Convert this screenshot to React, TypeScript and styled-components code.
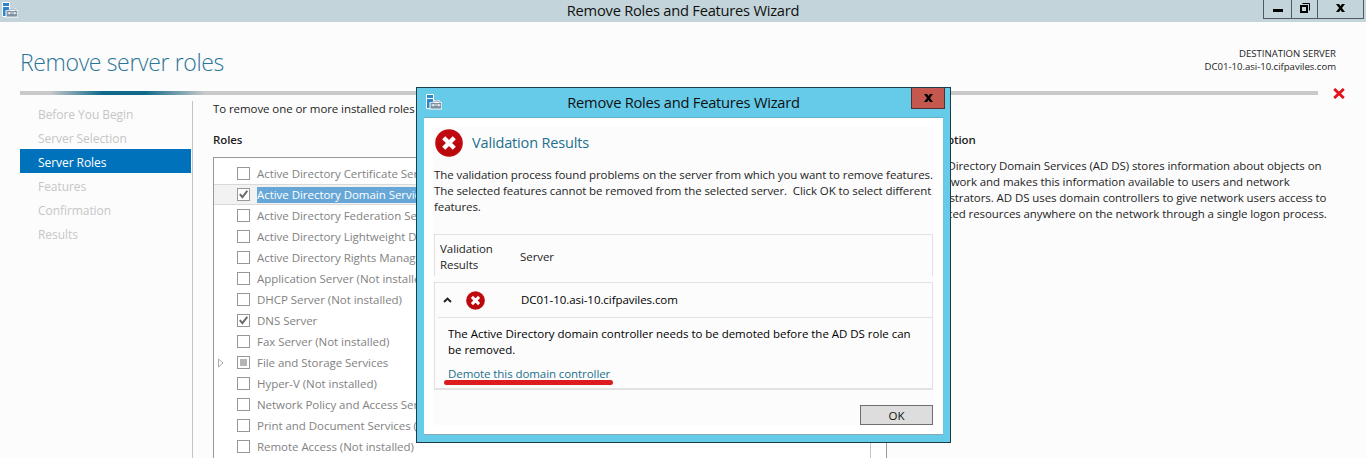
import React from 'react';
import styled, { createGlobalStyle, css } from 'styled-components';

const GlobalStyle = createGlobalStyle`
  * { box-sizing: border-box; }
  body {
    margin: 0;
    overflow: hidden;
    background: #fcfcfc;
    color: #1e1e1e;
    font: 11.5px/16px "Open Sans", "Noto Sans", sans-serif;
    letter-spacing: -0.06px;
  }
`;

const Window = styled.div`
  position: relative;
  display: flex;
  flex-direction: column;
  height: 458px;
  overflow: hidden;
  background: #fcfcfc;
`;

const TitleBar = styled.header`
  display: grid;
  grid-template-columns: 105px 1fr 105px;
  flex: none;
  height: 22px;
  background: #c3d5da;
`;

const AppIcon = styled.svg`
  display: block;
  width: 16px;
  height: 16px;
  margin: 2px 0 0 2px;
`;

const WindowTitle = styled.h1<{ $height: number }>`
  margin: 0;
  color: #111;
  font-size: 14.7px;
  font-weight: 400;
  line-height: ${p => p.$height}px;
  letter-spacing: -0.25px;
  text-align: center;
  white-space: nowrap;
`;

const Controls = styled.div`
  display: flex;
  height: 19px;
  margin-left: 2px;
`;

const ControlButton = styled.button<{ $width: number }>`
  display: flex;
  align-items: center;
  justify-content: center;
  width: ${p => p.$width}px;
  padding: 0 0 2px;
  border: solid #4f5b60;
  border-width: 0 1px 1px 0;
  background: transparent;
  &:first-child { border-left-width: 1px; }
`;

const PageHeader = styled.div`
  display: flex;
  flex: none;
  justify-content: space-between;
  height: 69px;
  padding: 24px 30px 0 20px;
`;

const PageTitle = styled.h2`
  margin: 0;
  color: #2b7596;
  font-size: 23px;
  font-weight: 300;
  line-height: 32px;
  letter-spacing: -0.36px;
`;

const Destination = styled.div`
  padding-top: 1px;
  font-size: 9.6px;
  line-height: 13px;
  letter-spacing: -0.03px;
  text-align: right;
`;

const ProgressRow = styled.div`
  display: flex;
  flex: none;
  height: 4px;
  padding-left: 20px;
  align-items: center;
  gap: 15px;
`;

const ProgressTrack = styled.div`
  width: 1298px;
  height: 4px;
  background: linear-gradient(90deg, #c9c9c9 30px, #0f6a8a 82px, #0f6a8a 125px, #c9c9c9 185px);
`;

const Body = styled.div`
  display: flex;
  flex: 1;
  min-height: 0;
  padding: 6px 0 0 20px;
`;

const Nav = styled.nav`
  width: 173px;
  padding-right: 1px;
  border-right: 1px solid #c4c4c4;
`;

const NavItem = styled.div<{ $active?: boolean }>`
  height: 24px;
  padding-left: 18px;
  color: #c6c6c6;
  font-size: 12px;
  line-height: 28px;
  ${p => p.$active && css`
    background: #0072bc;
    color: #fff;
  `}
`;

const Main = styled.main`
  display: flex;
  flex-direction: column;
  width: 674px;
  margin-left: 20px;
`;

const Intro = styled.p`
  margin: 0;
  height: 31px;
  letter-spacing: -0.08px;
`;

const SectionLabel = styled.h3`
  margin: 0;
  font-size: 11.5px;
  font-weight: 600;
  line-height: 16px;
  letter-spacing: -0.1px;
`;

const RoleBox = styled.div`
  display: flex;
  flex: 1;
  min-height: 0;
  margin-top: 9px;
  border: solid #999;
  border-width: 1px 1px 0;
  background: #fff;
  overflow: hidden;
`;

const RoleList = styled.div`
  width: 657px;
  padding-top: 5px;
  border-right: 1px solid #c4c4c4;
`;

const RoleRow = styled.div<{ $selected?: boolean }>`
  display: grid;
  grid-template-columns: 23px 20px auto;
  align-items: center;
  justify-content: start;
  height: 21px;
  color: #828282;
  letter-spacing: -0.04px;
  ${p => p.$selected && css`
    background: #f2f2f2;
    box-shadow: inset 0 1px #d9d9d9, inset 0 -1px #d9d9d9;
    color: #fff;
  `}
`;

const RoleName = styled.span<{ $selected?: boolean }>`
  white-space: nowrap;
  background: ${p => (p.$selected ? '#66a7d8' : 'none')};
`;

const Expander = styled.svg`
  width: 6px;
  height: 10px;
  margin-left: 4px;
`;

const CheckBox = styled.span`
  display: flex;
  align-items: center;
  justify-content: center;
  width: 13px;
  height: 13px;
  border: 1px solid #979797;
  background: #fff;
`;

const PartialMark = styled.i`
  width: 7px;
  height: 7px;
  background: #b5b5b5;
`;

const Description = styled.section`
  margin-left: 26px;
  padding-top: 31px;
`;

const DescriptionText = styled.p`
  margin: 10px 0 0;
  letter-spacing: -0.08px;
  white-space: nowrap;
`;

const Dialog = styled.section`
  position: absolute;
  left: 416px;
  top: 87px;
  display: flex;
  flex-direction: column;
  width: 535px;
  height: 356px;
  border: 1px solid #1d3c49;
  background: #66cae9;
`;

const DialogBar = styled.header`
  display: grid;
  grid-template-columns: 57px 1fr 57px;
  height: 29px;
`;

const DialogIcon = styled(AppIcon)`
  margin: 6px 0 0 9px;
`;

const CloseButton = styled.button`
  display: flex;
  align-items: center;
  justify-content: center;
  justify-self: end;
  width: 34px;
  height: 21px;
  margin-right: 5px;
  padding: 0 0 1px;
  border: 1px solid #54302f;
  border-top: 0;
  background: #c4584f;
`;

const DialogBody = styled.div`
  flex: 1;
  display: flex;
  flex-direction: column;
  margin: 0 7px 7px;
  padding: 10px 10px 9px;
  border: solid #5fb3cc;
  border-width: 1px 0 0;
  border-bottom: 1px solid #84a9b6;
  background: #fcfcfc;
  box-shadow: inset 0 0 0 9px #fff;
`;

const DialogHeading = styled.div`
  display: flex;
  align-items: center;
  gap: 9px;
  height: 29px;
  padding-left: 1px;
  color: #21708c;
  font-size: 14.5px;
  letter-spacing: -0.15px;
`;

const Message = styled.p`
  height: 49px;
  margin: 10px 0 0;
  letter-spacing: -0.09px;
  white-space: pre;
`;

const ResultHead = styled.div`
  display: grid;
  grid-template-columns: 80px 1fr;
  align-items: center;
  height: 42px;
  margin: 18px 0 6px;
  padding: 2px 5px 0;
  border: solid #e2e2e2;
  border-width: 1px 1px 0;
`;

const ResultPanel = styled.div`
  height: 108px;
  border: 1px solid #e2e2e2;
  border-bottom-width: 2px;
`;

const ResultRow = styled.div`
  display: grid;
  grid-template-columns: 28px 55px 1fr;
  align-items: center;
  height: 35px;
  margin-left: 3px;
  border-bottom: 1px solid #e2e2e2;
  color: #000;
`;

const Chevron = styled.svg`
  display: block;
  width: 9px;
  height: 6px;
  margin-left: 5px;
`;

const ResultDetail = styled.div`
  padding: 8px 13px 0;
  color: #000;
  letter-spacing: -0.03px;
`;

const DemoteLink = styled.a`
  position: relative;
  display: block;
  width: max-content;
  margin-top: 8px;
  color: #21708c;
  letter-spacing: -0.08px;
`;

const Marker = styled.i`
  position: absolute;
  left: -4px;
  top: 14px;
  width: 169px;
  height: 5px;
  border-radius: 3px;
  background: #dd1c20;
`;

const OkButton = styled.button`
  width: 73px;
  height: 20px;
  margin: auto 0 0 auto;
  padding: 0;
  border: 1px solid #707070;
  background: #dddddd;
  color: #111;
  font: 11.5px/17px "Open Sans", sans-serif;
`;

type Mark = 'none' | 'checked' | 'partial';

const steps = ['Before You Begin', 'Server Selection', 'Server Roles', 'Features', 'Confirmation', 'Results'];

const roles: { name: string; mark?: Mark; selected?: boolean; expandable?: boolean }[] = [
  { name: 'Active Directory Certificate Services' },
  { name: 'Active Directory Domain Services', mark: 'checked', selected: true },
  { name: 'Active Directory Federation Services' },
  { name: 'Active Directory Lightweight Directory' },
  { name: 'Active Directory Rights Management' },
  { name: 'Application Server (Not installed)' },
  { name: 'DHCP Server (Not installed)' },
  { name: 'DNS Server', mark: 'checked' },
  { name: 'Fax Server (Not installed)' },
  { name: 'File and Storage Services', mark: 'partial', expandable: true },
  { name: 'Hyper-V (Not installed)' },
  { name: 'Network Policy and Access Services' },
  { name: 'Print and Document Services (Not installed)' },
  { name: 'Remote Access (Not installed)' },
];

function ServerGlyph() {
  return (
    <>
      <path d="M0.5 0.5h7v14h-7z" fill="#2c86c9" stroke="#fff" />
      <path d="M1 4.5h6" stroke="#fff" />
      <path d="M3.5 15.5V8.2h2.7L8 6h5l1.8 2.2H16v7.3z" fill="#fff" />
      <path d="M4.5 9h10.8v5.6H4.5z" fill="#7b90a3" />
      <path d="M7 8.7l1.4-1.6h4.2L14 8.7" fill="none" stroke="#7b90a3" />
      <path d="M5.5 11h9" stroke="#fff" strokeWidth="0.8" />
      <path d="M6.6 10.3h1.2v1.9H6.6zM12.2 10.3h1.2v1.9h-1.2z" fill="#fff" />
    </>
  );
}

function CloseGlyph() {
  return (
    <svg width="9" height="8" viewBox="0 0 9 8">
      <path d="M0 0h3l1.5 2L6 0h3L6 4l3 4H6L4.5 6 3 8H0l3-4z" fill="#000" />
    </svg>
  );
}

function ErrorIcon({ size }: { size: number }) {
  return (
    <svg width={size} height={size} viewBox="0 0 28 28">
      <circle cx="14" cy="14" r="13.8" fill="#c00a0f" />
      <path d="M2 14a12 12 0 0 0 24 0z" fill="#a90508" opacity="0.35" />
      <path d="M8.7 8.7l10.6 10.6M19.3 8.7L8.7 19.3" stroke="#fff" strokeWidth="4.4" />
    </svg>
  );
}

function RoleCheck({ mark }: { mark?: Mark }) {
  return (
    <CheckBox>
      {mark === 'checked' && (
        <svg width="9" height="9" viewBox="0 0 9 9">
          <path d="M0.8 4.2l2.6 3L8.3 0.8" fill="none" stroke="#6a6a6a" strokeWidth="2" />
        </svg>
      )}
      {mark === 'partial' && <PartialMark />}
    </CheckBox>
  );
}

export default function App() {
  return (
    <Window>
      <GlobalStyle />
      <TitleBar>
        <AppIcon viewBox="0 0 16 16"><ServerGlyph /></AppIcon>
        <WindowTitle $height={21}>Remove Roles and Features Wizard</WindowTitle>
        <Controls>
          <ControlButton $width={29}>
            <svg width="10" height="12" viewBox="0 0 10 12"><path d="M0 7h10v3H0z" /></svg>
          </ControlButton>
          <ControlButton $width={26}>
            <svg width="10" height="10" viewBox="0 0 10 10">
              <path d="M2.5 0.5h7v7" fill="none" stroke="#000" />
              <path d="M1 3h6v6H1z" fill="none" stroke="#000" strokeWidth="2" />
            </svg>
          </ControlButton>
          <ControlButton $width={46}><CloseGlyph /></ControlButton>
        </Controls>
      </TitleBar>
      <PageHeader>
        <PageTitle>Remove server roles</PageTitle>
        <Destination>
          <div>DESTINATION SERVER</div>
          <div>DC01-10.asi-10.cifpaviles.com</div>
        </Destination>
      </PageHeader>
      <ProgressRow>
        <ProgressTrack />
        <svg width="12" height="11" viewBox="0 0 12 11">
          <path d="M1.2 0.9l9.6 9.2M10.8 0.9L1.2 10.1" stroke="#e2131a" strokeWidth="2.8" />
        </svg>
      </ProgressRow>
      <Body>
        <Nav>
          {steps.map(step => <NavItem key={step} $active={step === 'Server Roles'}>{step}</NavItem>)}
        </Nav>
        <Main>
          <Intro>To remove one or more installed roles</Intro>
          <SectionLabel>Roles</SectionLabel>
          <RoleBox>
            <RoleList>
              {roles.map(role => (
                <RoleRow key={role.name} $selected={role.selected}>
                  {role.expandable ? (
                    <Expander viewBox="0 0 6 10">
                      <path d="M0.5 1v8L5 5z" fill="none" stroke="#aaa" />
                    </Expander>
                  ) : <span />}
                  <RoleCheck mark={role.mark} />
                  <RoleName $selected={role.selected}>{role.name}</RoleName>
                </RoleRow>
              ))}
            </RoleList>
          </RoleBox>
        </Main>
        <Description>
          <SectionLabel>Description</SectionLabel>
          <DescriptionText>
            Active Directory Domain Services (AD DS) stores information about objects on<br />
            the network and makes this information available to users and network<br />
            administrators. AD DS uses domain controllers to give network users access to<br />
            permitted resources anywhere on the network through a single logon process.
          </DescriptionText>
        </Description>
      </Body>

      <Dialog>
        <DialogBar>
          <DialogIcon viewBox="0 0 16 16"><ServerGlyph /></DialogIcon>
          <WindowTitle $height={28}>Remove Roles and Features Wizard</WindowTitle>
          <CloseButton><CloseGlyph /></CloseButton>
        </DialogBar>
        <DialogBody>
          <DialogHeading>
            <ErrorIcon size={28} />
            Validation Results
          </DialogHeading>
          <Message>
            {'The validation process found problems on the server from which you want to remove features.\nThe selected features cannot be removed from the selected server.  Click OK to select different\nfeatures.'}
          </Message>
          <ResultHead>
            <div>Validation<br />Results</div>
            <div>Server</div>
          </ResultHead>
          <ResultPanel>
            <ResultRow>
              <Chevron viewBox="0 0 9 6">
                <path d="M1 5l3.5-3.4L8 5" fill="none" stroke="#222" strokeWidth="2" />
              </Chevron>
              <ErrorIcon size={19} />
              <div>DC01-10.asi-10.cifpaviles.com</div>
            </ResultRow>
            <ResultDetail>
              The Active Directory domain controller needs to be demoted before the AD DS role can<br />
              be removed.
              <DemoteLink>Demote this domain controller<Marker /></DemoteLink>
            </ResultDetail>
          </ResultPanel>
          <OkButton>OK</OkButton>
        </DialogBody>
      </Dialog>
    </Window>
  );
}
